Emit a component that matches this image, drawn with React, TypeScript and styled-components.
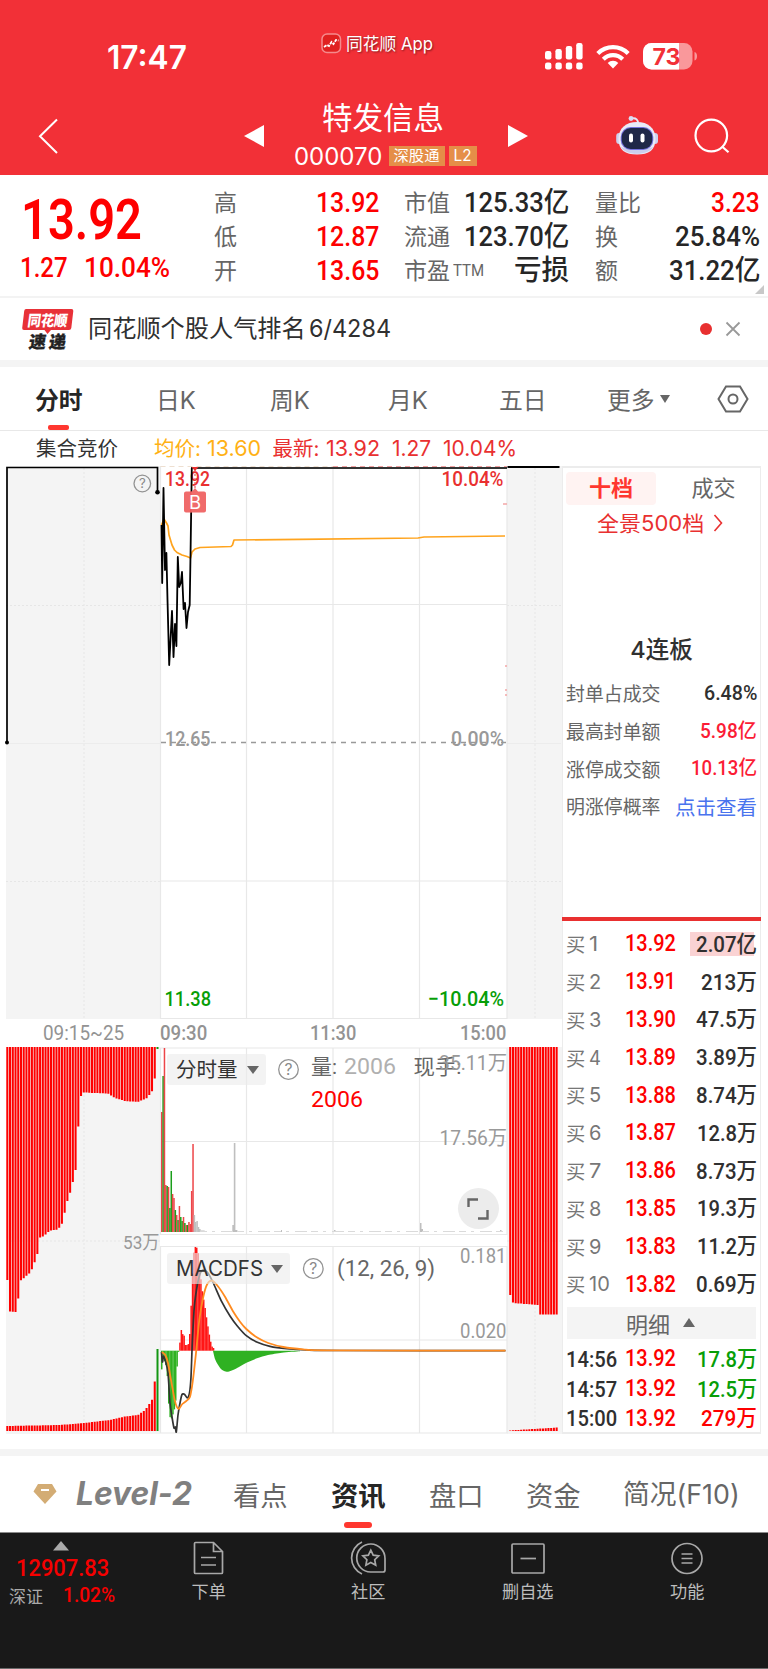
import React, { useLayoutEffect, useRef, useState } from "react";
import styled, { createGlobalStyle } from "styled-components";

const DIGITS = `Roboto, "Noto Sans CJK SC", sans-serif`;
const TEXT = `Inter, "Noto Sans CJK SC", sans-serif`;
const RED = "#fe0000";
const BRAND = "#f23037";

const Global = createGlobalStyle`
  * { box-sizing: border-box; }
  body { margin: 0; background: #fff; font-family: ${TEXT}; color: #303030; }
  svg { display: block; }
`;

const Screen = styled.div`
  width: 768px;
  height: 1669px;
  display: flex;
  flex-direction: column;
  overflow: hidden;
  background: #fff;
`;

/* ---------- fixed-width label: glyphs are condensed to the given width ---------- */

type FitProps = {
  w: number;
  size: number;
  color?: string;
  weight?: number;
  font?: string;
  italic?: boolean;
  ml?: number;
  children: React.ReactNode;
};

const FitBox = styled.span<{ $w: number; $size: number; $color?: string; $weight: number; $font: string; $italic?: boolean; $ml: number }>`
  display: inline-block;
  flex: none;
  width: ${(p) => p.$w}px;
  height: ${(p) => p.$size}px;
  margin-left: ${(p) => p.$ml}px;
  line-height: ${(p) => p.$size}px;
  font-size: ${(p) => p.$size}px;
  font-weight: ${(p) => p.$weight};
  font-family: ${(p) => p.$font};
  font-style: ${(p) => (p.$italic ? "italic" : "normal")};
  color: ${(p) => p.$color ?? "inherit"};
  white-space: pre;
`;

const FitInner = styled.span`
  display: inline-block;
  transform-origin: 0 50%;
`;

function Fit({ w, size, color, weight = 400, font = DIGITS, italic, ml = 0, children }: FitProps) {
  const ref = useRef<HTMLSpanElement>(null);
  const [scale, setScale] = useState(1);
  useLayoutEffect(() => {
    if (ref.current && ref.current.offsetWidth) setScale(w / ref.current.offsetWidth);
  }, [w]);
  return (
    <FitBox $w={w} $size={size} $color={color} $weight={weight} $font={font} $italic={italic} $ml={ml}>
      <FitInner ref={ref} style={{ transform: `scaleX(${scale})` }}>{children}</FitInner>
    </FitBox>
  );
}

/* ---------- header ---------- */

const Header = styled.header`
  height: 175px;
  flex: none;
  background: ${BRAND};
  color: #fff;
`;

const StatusBar = styled.div`
  height: 100px;
  padding: 30px 70px 0 107px;
  display: grid;
  grid-template-columns: 214px 224px 1fr;
  align-items: start;
`;

const Clock = styled.div`
  padding-top: 12px;
`;

const Watermark = styled.div`
  display: flex;
  align-items: center;
  gap: 4px;
  height: 27px;
  text-shadow: 1px 1px 2px rgba(0, 0, 0, 0.45);
`;

const StatusIcons = styled.div`
  display: flex;
  align-items: center;
  gap: 13px;
  padding-top: 13px;
`;

const NavRow = styled.div`
  height: 75px;
  padding-left: 37px;
  display: grid;
  grid-template-columns: 207px 20px 244px 20px 88px 78px 1fr;
  align-items: start;
`;

const Down = styled.div<{ $y: number }>`
  padding-top: ${(p) => p.$y}px;
`;

const TitleBlock = styled.div`
  display: flex;
  flex-direction: column;
  align-items: center;
`;

const StockName = styled.h1`
  margin: 2px 0 0 -6px;
  font-size: 30.5px;
  line-height: 32px;
  font-weight: 400;
`;

const CodeLine = styled.div`
  display: flex;
  align-items: center;
  margin-top: 10px;
  margin-left: -2px;
  height: 24px;
`;

const Badge = styled.span<{ $w: number; $ml: number }>`
  width: ${(p) => p.$w}px;
  height: 20px;
  margin-left: ${(p) => p.$ml}px;
  background: #e58e48;
  font-size: 15.3px;
  line-height: 19px;
  text-align: center;
`;

/* ---------- quote ---------- */

const Quote = styled.section`
  height: 123px;
  flex: none;
  display: grid;
  grid-template-columns: 214px 165px 25px 165px 26px 165px;
  border-bottom: 2px solid #f3f3f3;
  position: relative;
`;

const PriceBlock = styled.div`
  padding: 17px 0 0 21px;
`;

const ChangeLine = styled.div`
  display: flex;
  margin: 6px 0 0 -1px;
`;

const Stats = styled.div<{ $col: number }>`
  grid-column: ${(p) => p.$col};
  padding-top: 10.5px;
`;

const Stat = styled.div`
  height: 34px;
  display: flex;
  align-items: center;
  justify-content: space-between;
`;

const StatLabel = styled.span`
  font-size: 23px;
  line-height: 34px;
  color: #666;
  display: flex;
  align-items: center;
`;

const Corner = styled.i`
  position: absolute;
  right: 4px;
  bottom: 2px;
  border-left: 9px solid transparent;
  border-bottom: 9px solid #c8c8c8;
`;

/* ---------- news row ---------- */

const News = styled.section`
  height: 62px;
  flex: none;
  padding: 0 27px 0 22px;
  display: flex;
  align-items: center;
`;

const NewsText = styled.div`
  margin-left: 14px;
  flex: 1;
  display: flex;
  align-items: center;
`;

const NewsTitle = styled.span`
  font-size: 24.2px;
  line-height: 34px;
  width: 221px;
  white-space: nowrap;
`;

const Dot = styled.i`
  width: 12px;
  height: 12px;
  border-radius: 50%;
  background: #e83030;
  margin-right: 13px;
`;

const Band = styled.div<{ $h: number }>`
  height: ${(p) => p.$h}px;
  flex: none;
  background: #f4f4f4;
`;

/* ---------- period tabs ---------- */

const PeriodTabs = styled.nav`
  height: 64px;
  flex: none;
  padding: 0 0 0 35px;
  display: grid;
  grid-template-columns: 121px 114px 118px 111px 108px 110px 32px;
  border-bottom: 1px solid #e8e8e8;
`;

const PeriodTab = styled.div<{ $active?: boolean }>`
  height: 63px;
  display: flex;
  align-items: center;
  gap: 5px;
  font-size: 23.8px;
  color: ${(p) => (p.$active ? "#262626" : "#666")};
  font-weight: ${(p) => (p.$active ? 700 : 400)};
  position: relative;
  &::after {
    content: "";
    display: ${(p) => (p.$active ? "block" : "none")};
    position: absolute;
    left: 13px;
    bottom: 0;
    width: 21px;
    height: 5px;
    border-radius: 2px;
    background: #ff372f;
  }
`;

const Caret = styled.i<{ $w: number; $h: number; $up?: boolean; $color?: string }>`
  width: 0;
  height: 0;
  border-left: ${(p) => p.$w / 2}px solid transparent;
  border-right: ${(p) => p.$w / 2}px solid transparent;
  border-${(p) => (p.$up ? "bottom" : "top")}: ${(p) => p.$h}px solid ${(p) => p.$color ?? "#666"};
`;

const Legend = styled.div`
  height: 35px;
  flex: none;
  padding: 1px 0 0 36px;
  display: flex;
  align-items: center;
`;

const LegendTitle = styled.span<{ $w: number; $color: string }>`
  width: ${(p) => p.$w}px;
  color: ${(p) => p.$color};
  font-size: 20.5px;
  line-height: 30px;
  white-space: nowrap;
`;

/* ---------- chart area ---------- */

const Board = styled.main`
  height: 983px;
  flex: none;
  display: flex;
  padding-right: 7px;
`;

const Charts = styled.div`
  width: 562px;
  flex: none;
  display: flex;
  flex-direction: column;
`;

const TimeAxis = styled.div`
  height: 28px;
  display: flex;
  align-items: center;
  padding-left: 43px;
  color: #939393;
`;

const LowerCharts = styled.div`
  position: relative;
`;

const Selector = styled.button<{ $top: number; $w: number }>`
  position: absolute;
  left: 167px;
  top: ${(p) => p.$top}px;
  width: ${(p) => p.$w}px;
  height: 31px;
  border: 0;
  border-radius: 3px;
  padding: 0 7px 0 9px;
  display: flex;
  align-items: center;
  justify-content: space-between;
  background: rgba(236, 236, 236, 0.62);
  color: #333;
  font: 400 20.5px/31px ${TEXT};
`;

const Expand = styled.button`
  position: absolute;
  left: 457.5px;
  top: 141px;
  width: 41px;
  height: 41px;
  border: 0;
  padding: 0;
  border-radius: 50%;
  background: #ececec;
  display: grid;
  place-items: center;
`;

/* ---------- order book ---------- */

const Book = styled.aside`
  width: 199px;
  height: 968px;
  border: 1px solid #ececec;
  border-width: 2px 1px;
  display: flex;
  flex-direction: column;
  color: #303030;
  & > * {
    flex: none;
  }
`;

const BookTabs = styled.div`
  display: grid;
  grid-template-columns: 90px 1fr;
  padding: 4px 0 0 3px;
  height: 37px;
`;

const BookTab = styled.div<{ $active?: boolean }>`
  height: 33px;
  border-radius: 4px;
  font-size: 22px;
  line-height: 32px;
  padding-left: ${(p) => (p.$active ? 0 : 11)}px;
  text-align: center;
  background: ${(p) => (p.$active ? "#fff3f2" : "transparent")};
  color: ${(p) => (p.$active ? "#ff372f" : "#666")};
  font-weight: ${(p) => (p.$active ? 700 : 400)};
`;

const FullDepth = styled.div`
  height: 36px;
  padding-left: 34px;
  display: flex;
  align-items: center;
  gap: 9px;
  color: #e93030;
  font-size: 20.5px;
`;

const Streak = styled.div`
  margin-top: 88px;
  height: 45px;
  line-height: 42px;
  text-align: center;
  font-size: 23.5px;
  font-weight: 500;
`;

const LimitRow = styled.div`
  height: 37.7px;
  padding: 0 3px 0 3px;
  display: flex;
  align-items: center;
  justify-content: space-between;
  white-space: nowrap;
`;

const LimitLabel = styled.span`
  font-size: 18.9px;
  color: #666;
`;

const LimitLink = styled.span`
  font-size: 20.5px;
  color: #4a74ee;
`;

const Divider = styled.div`
  height: 4px;
  margin: 92.5px -1px 0;
  background: #e93030;
`;

const Bids = styled.div`
  padding-top: 4px;
`;

const BidRow = styled.div`
  height: 37.8px;
  padding: 0 3px;
  display: grid;
  grid-template-columns: 23px 36px 60px 1fr;
  align-items: center;
`;

const BidLabel = styled.span`
  font-size: 19.3px;
  color: #777;
`;

const Volume = styled.span<{ $hot?: boolean }>`
  display: flex;
  justify-content: flex-end;
  align-items: center;
  height: 24px;
  margin-left: 5px;
  background: ${(p) => (p.$hot ? "linear-gradient(90deg, #fad2d3 64px, transparent 64px)" : "none")};
`;

const DetailBar = styled.div`
  height: 32px;
  margin: 3.5px 4px 5.5px;
  background: #f4f4f4;
  display: flex;
  align-items: center;
  justify-content: center;
  gap: 13px;
  padding-right: 2px;
  font-size: 22px;
  color: #666;
`;

const TradeRow = styled.div`
  height: 29.7px;
  padding: 0 3px;
  display: grid;
  grid-template-columns: 59px 60px 1fr;
  align-items: center;
`;

/* ---------- footer ---------- */

const InfoTabs = styled.nav`
  height: 77px;
  flex: none;
  padding-left: 33px;
  display: grid;
  grid-template-columns: 43px 157px 98px 98px 97px 97px 1fr;
  border-bottom: 1px solid #8b8b8b;
`;

const InfoTab = styled.div<{ $active?: boolean }>`
  height: 76px;
  display: flex;
  align-items: center;
  white-space: nowrap;
  font-size: 27.3px;
  color: ${(p) => (p.$active ? "#262626" : "#666")};
  font-weight: ${(p) => (p.$active ? 700 : 400)};
  position: relative;
  &::after {
    content: "";
    display: ${(p) => (p.$active ? "block" : "none")};
    position: absolute;
    left: 13px;
    bottom: 4.5px;
    width: 28px;
    height: 6px;
    border-radius: 3px;
    background: #ff372f;
  }
`;

const BottomBar = styled.footer`
  height: 136px;
  flex: none;
  background: #191919;
  border-bottom: 1px solid #6a6a6a;
  display: grid;
  grid-template-columns: 129px repeat(4, 159.5px);
`;

const IndexBlock = styled.div`
  padding: 8px 0 0 9px;
  display: flex;
  flex-direction: column;
`;

const IndexValue = styled.div`
  height: 26px;
  margin-top: 4px;
  display: flex;
  align-items: center;
`;

const IndexLine = styled.div`
  display: flex;
  align-items: center;
  height: 24px;
  margin-top: 2px;
  color: #aaa;
  font-size: 17px;
`;

const Action = styled.div`
  display: flex;
  flex-direction: column;
  align-items: center;
  padding-top: 7px;
  font-size: 17.2px;
  line-height: 22px;
  color: #bdbdbd;
  gap: 5px;
`;

/* ---------- icons ---------- */

const Robot = () => (
  <svg width="44" height="42" viewBox="0 0 44 42">
    <path d="M22 10C22.500 6 20 3.500 15.500 4.500" stroke="#e6e8f7" strokeWidth="2" fill="none" />
    <circle cx="15" cy="4.500" r="2.400" fill="#d9dcf3" />
    <rect x=".2" y="19" width="6" height="11" rx="3" fill="#cdd1ef" />
    <rect x="36" y="19" width="6" height="11" rx="3" fill="#cdd1ef" />
    <path d="M21 8C32 8 39.500 14 39.500 25S33 40.500 21 40.500 2.500 36 2.500 25 10 8 21 8z" fill="#e9eaf8" />
    <path d="M5 33c4 9 28 9 32 0-6 3-26 3-32 0z" fill="#cbcdec" />
    <rect x="4.700" y="13" width="32.600" height="23" rx="10" fill="#7471dc" />
    <rect x="5.700" y="14" width="30.600" height="21" rx="9" fill="#1f2848" />
    <rect x="13" y="19.500" width="4" height="9" rx="2" fill="#fff" />
    <rect x="24.500" y="19.500" width="4" height="9" rx="2" fill="#fff" />
  </svg>
);

const Help = ({ x, y, r }: { x: number; y: number; r: number }) => (
  <g>
    <circle cx={x} cy={y} r={r} fill="none" stroke="#939393" strokeWidth="1.300" />
    <text x={x} y={y + r * 0.55} textAnchor="middle" fontSize={r * 1.6} fill="#8a8a8a" fontFamily="Inter, sans-serif">?</text>
  </g>
);

const SignalIcon = () => (
  <svg width="38" height="27" viewBox="0 0 38 27" fill="#fff">
    {[8, 6, 3, 0].map((top, i) => (
      <g key={i}>
        <rect x={i * 10.400} y={top} width="6.400" height={16.500 - top} rx="2.200" />
        <rect x={i * 10.400} y="19.500" width="6.400" height="7" rx="2.200" />
      </g>
    ))}
  </svg>
);

const WifiIcon = () => (
  <svg width="34" height="25" viewBox="0 0 34 25">
    <g fill="none" stroke="#fff" strokeWidth="4.200">
      <path d="M1.800 9.400a21.500 21.500 0 0 1 30.400 0" />
      <path d="M7.300 15.200a13.600 13.600 0 0 1 19.400 0" />
    </g>
    <path d="M17 24.500l-5.300-5.500a7.500 7.500 0 0 1 10.600 0z" fill="#fff" />
  </svg>
);

const BatteryIcon = () => (
  <svg width="55" height="27" viewBox="0 0 55 27">
    <defs>
      <clipPath id="charge"><rect width="36" height="27" /></clipPath>
    </defs>
    <rect width="49.500" height="26.500" rx="8.500" fill="#f9989b" />
    <rect width="49.500" height="26.500" rx="8.500" fill="#fff" clipPath="url(#charge)" />
    <path d="M51.500 9c3.400 1 3.400 7.500 0 8.500z" fill="#f9989b" />
    <text x="9.500" y="21.500" fontSize="22.500" fontWeight="700" fill={BRAND} fontFamily="Inter, sans-serif" textLength="28" lengthAdjust="spacingAndGlyphs">73</text>
  </svg>
);

const NewsLogo = () => (
  <svg width="52" height="43" viewBox="0 0 52 43">
    <path d="M4 1h45.500q2 0 1.800 2l-2 17q-.3 2-2.300 2H29l-3.500 4-3-4H2q-2 0-1.800-2l2-17Q2.500 1 4 1z" fill="#e83138" />
    <g transform="skewX(-8)" fontFamily={TEXT} fontWeight="900">
      <text x="7.500" y="18" fontSize="15" fill="#fff" textLength="40" lengthAdjust="spacingAndGlyphs">同花顺</text>
      <text x="12" y="40.500" fontSize="17" fill="#222" stroke="#222" strokeWidth=".3" textLength="37" lengthAdjust="spacing">速递</text>
    </g>
  </svg>
);

/* ---------- chart data ---------- */

type Pt = [number, number];
const path = (pts: Pt[]) => "M" + pts.map((p) => p.join(" ")).join("L");

const smooth = (pts: Pt[]) => {
  let d = `M${pts[0][0]} ${pts[0][1]}`;
  for (let i = 0; i < pts.length - 1; i++) {
    const p0 = pts[Math.max(i - 1, 0)];
    const p1 = pts[i];
    const p2 = pts[i + 1];
    const p3 = pts[Math.min(i + 2, pts.length - 1)];
    d += `C${p1[0] + (p2[0] - p0[0]) / 8} ${p1[1] + (p2[1] - p0[1]) / 8} ${p2[0] - (p3[0] - p1[0]) / 8} ${p2[1] - (p3[1] - p1[1]) / 8} ${p2[0]} ${p2[1]}`;
  }
  return d;
};

const at = (pts: Pt[], x: number) => {
  for (let i = 1; i < pts.length; i++) {
    if (x <= pts[i][0]) {
      const [x0, y0] = pts[i - 1];
      const [x1, y1] = pts[i];
      return y0 + ((y1 - y0) * (x - x0)) / (x1 - x0 || 1);
    }
  }
  return pts[pts.length - 1][1];
};

const PRICE: Pt[] = [[161.500, 525], [162.200, 583], [163.500, 488], [165, 570], [166.400, 553], [167.500, 600], [169.200, 665], [172, 611], [173.500, 657], [175, 624], [176.400, 646], [177.800, 557], [179.200, 587], [180.800, 583], [182, 572], [183.600, 609], [185, 603], [186.500, 628], [188, 612], [189.700, 605], [190.600, 550], [191.800, 468], [193, 468]];
const AVERAGE: Pt[] = [[161.500, 525], [164, 519], [166.500, 523], [168, 526], [169, 535], [172, 545], [174.500, 550], [177, 552.500], [182, 555], [187, 556.500], [190.500, 558], [192, 552], [195, 549], [200, 547.500], [231, 546.500], [232.500, 545], [234, 540], [300, 539.300], [418, 538], [424, 537], [505, 536]];

const PITCH = 2.73;
const AUCTION_TOP: Pt[] = [[6, 1280], [7.500, 1280], [8, 1311.500], [18, 1312], [18.500, 1281], [22, 1280], [26, 1276], [30, 1273], [33, 1267], [38, 1252], [39, 1238], [44, 1236], [50, 1230.500], [58, 1229.500], [63, 1222], [66, 1205], [71, 1190], [76, 1168], [77.500, 1140], [79, 1114], [80.500, 1097], [83, 1092.500], [108, 1093.500], [115, 1098], [125, 1101], [138, 1102], [147, 1098], [153, 1090], [154.500, 1080], [156, 1069]];
const AUCTION_BOTTOM: Pt[] = [[6, 1426], [60, 1425], [84, 1423], [110, 1420], [125, 1416.500], [138, 1415], [145, 1410], [150, 1403], [153, 1398], [154, 1385], [156, 1375]];
const CLOSE_TOP: Pt[] = [[508, 1295], [511, 1295], [512, 1303], [537, 1305], [538, 1314.500], [558, 1314.500]];

const MINUTE_VOLUME: [number, string][] = [[1112, "r"], [1076, "g"], [1048, "r"], [1185, "r"], [1186, "g"], [1187, "r"], [1208, "g"], [1171, "g"], [1194, "r"], [1198, "r"], [1210, "g"], [1215, "r"], [1220, "g"], [1206, "r"], [1217, "g"], [1221, "g"], [1217, "r"], [1223, "g"], [1225, "r"], [1225, "g"], [1222, "r"], [1224, "r"], [1191, "r"], [1144, "r"], [1215, "x"], [1222, "x"], [1221, "x"], [1227, "x"], [1229, "x"], [1230.500, "x"], [1230.500, "x"], [1230.500, "x"]];
const TONES: Record<string, string> = { r: "#ed4548", g: "#1b9e1b", x: "#bfbfbf" };

const HIST: Pt[] = [[161.500, 1371], [163, 1359], [165, 1362], [166.500, 1367], [168, 1384], [169, 1412], [170.500, 1419], [172, 1418], [174, 1410], [175.500, 1407], [176.500, 1375], [177.700, 1358], [179, 1348], [180, 1342], [181, 1329], [182.500, 1334], [184, 1335], [185.500, 1345], [188, 1345], [189.300, 1341], [190.500, 1320], [191.800, 1289], [193.300, 1256], [195, 1247], [196.500, 1247], [198, 1252], [199.500, 1270], [201, 1280], [202.500, 1293], [204.500, 1304], [206, 1314], [207.500, 1324], [209, 1333], [210.500, 1341], [212.500, 1348]];
const HUMP: Pt[] = [[213, 1351], [215, 1359], [217.500, 1364], [220.500, 1368.500], [224, 1371], [228, 1371.700], [233, 1370], [239, 1367], [247, 1362.500], [257, 1358.300], [268, 1355], [282, 1352.700], [300, 1351.300]];
const DIF: Pt[] = [[161.500, 1352], [162.500, 1362], [163.500, 1356], [165.700, 1362], [168, 1373], [170, 1403], [172, 1417], [174, 1428], [175.300, 1427], [176.300, 1432], [178, 1415], [180, 1403], [182, 1394.500], [184.700, 1394.500], [187.300, 1398], [189.500, 1393], [191, 1377], [192.300, 1343], [194.300, 1307], [197.300, 1285], [200, 1274], [203.300, 1269.500], [208.300, 1273.500], [213.300, 1283], [221.700, 1301.700], [230, 1316], [237.300, 1326], [246.300, 1335.700], [256.700, 1342], [270, 1346.300], [286.700, 1348.700], [306.700, 1350], [340, 1350.500], [505.500, 1350.700]];
const DEA: Pt[] = [[162, 1352], [165.300, 1355], [168, 1363], [171.300, 1381.700], [174.700, 1400], [176.700, 1406.700], [179, 1408.700], [182.300, 1404], [186.700, 1400.700], [190, 1396.700], [192.700, 1381.700], [196, 1353], [199.300, 1320], [203.300, 1296.700], [207.300, 1284], [212, 1280.700], [218.300, 1286.700], [225, 1296.700], [233.300, 1311.700], [240, 1321.700], [246.300, 1329], [256.700, 1337.300], [268.300, 1343], [283.300, 1347], [303.300, 1349.300], [326.700, 1350.300], [505.500, 1350.700]];

const Label = ({ x, y, w, size, fill, weight = 400, children }: { x: number; y: number; w: number; size: number; fill: string; weight?: number; children: string }) => (
  <text x={x} y={y} fontSize={size} fill={fill} fontWeight={weight} fontFamily={DIGITS} textLength={w} lengthAdjust="spacingAndGlyphs">{children}</text>
);

const VGRID = [246.500, 333, 419.500];

function PriceChart() {
  return (
    <svg width="562" height="553" viewBox="0 466 562 553">
      <rect x="6" y="466" width="154" height="553" fill="#f4f4f4" />
      <rect x="507" y="466" width="55" height="553" fill="#f4f4f4" />
      <g stroke="#e6e6e6" strokeWidth="1" strokeDasharray="2 2">
        <path d="M84 468V1019M535 468V1019M6 605.500H160M507 605.500H561M6 881.500H160M507 881.500H561" />
      </g>
      <g stroke="#e8e8e8" strokeWidth="1.200" fill="none">
        <path d="M6 743.500H160M507 743.500H561" stroke="#ececec" />
        <path d="M160.500 466V1018.500H507V466M160.500 604.500H507M160.500 881H507" />
        {VGRID.map((x) => <path key={x} d={`M${x} 467V1018`} />)}
      </g>
      <path d="M160.500 466.300H333" stroke="#eedfd0" strokeWidth="1.500" strokeDasharray="5 4" />
      <path d="M333 466.300H507" stroke="#f0a0a0" strokeWidth="1.500" strokeDasharray="5 4" />
      <path d="M161 742.500H507" stroke="#999" strokeWidth="1.300" strokeDasharray="5 5" />
      <path d="M503 504H507M505 666H507M505 690H507M505 695H507" stroke="#f4a6a6" strokeWidth="1.500" />
      <Label x={165} y={486} w={45} size={21} fill="#e93030" weight={500}>13.92</Label>
      <Label x={441.500} y={486} w={62} size={21} fill="#e93030" weight={500}>10.04%</Label>
      <Label x={165} y={746} w={45.500} size={21} fill="#999" weight={500}>12.65</Label>
      <Label x={451} y={746} w={53} size={21} fill="#999" weight={500}>0.00%</Label>
      <Label x={164.500} y={1006} w={46.500} size={21} fill="#079e07" weight={500}>11.38</Label>
      <Label x={428} y={1006} w={76} size={21} fill="#079e07" weight={500}>−10.04%</Label>
      <path d={path(AVERAGE)} fill="none" stroke="#ffa41e" strokeWidth="1.700" strokeLinejoin="round" />
      <path d={path(PRICE)} fill="none" stroke="#000" strokeWidth="1.800" strokeLinejoin="round" />
      <path d="M192 468H507" stroke="#333" strokeWidth="2" />
      <path d="M7 742V467.500H157.500V492" stroke="#000" strokeWidth="1.700" fill="none" />
      <path d="M507.500 467H559.500" stroke="#000" strokeWidth="2" />
      <circle cx="7" cy="742.500" r="2" />
      <circle cx="157.500" cy="492.300" r="2.300" />
      <path d="M195 470V490" stroke="#ee6a6a" strokeDasharray="2 2" strokeWidth="1.300" />
      <path d="M191.500 467h7l-3.500 4z" fill="#e93030" />
      <path d="M195 488l3 3.500h6q2 0 2 2v17q0 2-2 2h-18q-2 0-2-2v-17q0-2 2-2h6z" fill="#f06b6b" />
      <path d="M190.800 491V512.500" stroke="#e85555" strokeWidth="1" />
      <text x="195" y="509" textAnchor="middle" fontSize="18.500" fill="#fff" fontFamily="Inter, sans-serif">B</text>
      <Help x={142.300} y={483.500} r={8.300} />
    </svg>
  );
}

const range = (from: number, to: number, step: number) => {
  const out: number[] = [];
  for (let v = from; v < to; v += step) out.push(v);
  return out;
};

function LowerSvg() {
  const bars = range(6.300, 156, PITCH);
  return (
    <svg width="562" height="387" viewBox="0 1047 562 387">
      <rect x="6" y="1047" width="154" height="387" fill="#f4f4f4" />
      <rect x="507" y="1047" width="55" height="387" fill="#f4f4f4" />
      <g stroke="#e6e6e6" strokeDasharray="2 2">
        <path d="M84 1047V1434M535 1047V1434M6 1241H160M507 1241H561" />
      </g>
      <rect x="161" y="1047" width="346" height="387" fill="#fff" />
      <g stroke="#e8e8e8" strokeWidth="1.200" fill="none">
        <path d="M160.500 1048H507V1234.500H160.500zM160.500 1246.500H507V1433H160.500zM160.500 1141.500H507M160.500 1340H507" />
        {VGRID.map((x) => <path key={x} d={`M${x} 1048V1234M${x} 1246V1433`} />)}
      </g>
      <g fill="#ff0000">
        <path d={bars.map((x) => `M${x} 1047h2.050V${at(AUCTION_TOP, x + 1).toFixed(1)}h-2.050z`).join("")} />
        <path d={bars.map((x) => `M${x} 1431h2.050V${at(AUCTION_BOTTOM, x + 1).toFixed(1)}h-2.050z`).join("")} />
        <path d={range(509.200, 557.500, PITCH).map((x) => `M${x} 1047h2.050V${at(CLOSE_TOP, x).toFixed(1)}h-2.050z`).join("")} />
        <path d={range(509.200, 557.500, PITCH).map((x) => `M${x} 1431h2.050v${(-0.6 - ((x - 509) / 49) * 3).toFixed(1)}h-2.050z`).join("")} />
      </g>
      <path d="M156.500 1047h2v2h-2zM156.500 1349h2v82h-2z" fill="#129612" />
      {MINUTE_VOLUME.map(([top, tone], i) => (
        <rect key={i} x={161 + i * 1.360} y={top} width="1.500" height={1232 - top} fill={TONES[tone]} />
      ))}
      <path d="M233.800 1143h1.600v89h-1.600zM232.300 1225h1.500v7h-1.500zM235.400 1230h2v2h-2zM420 1223h1.500v9h-1.500zM421.500 1229h1.500v3h-1.500zM281 1230h1v2h-1zM334 1230h1.500v2h-1.500zM500 1230h1.500v2h-1.500z" fill="#bfbfbf" />
      <path d="M200 1231.500H507" stroke="#dadada" strokeDasharray="7 5 3 6 12 4" />
      {range(161, 213, 1.400).map((x) => {
        const y = at(HIST, x + 0.7);
        return <rect key={x} x={x} y={Math.min(y, 1350.700)} width="1.500" height={Math.abs(1350.700 - y)} fill={y < 1350.700 ? "#ff1616" : "#2fb122"} />;
      })}
      <path d={smooth(HUMP) + "V1350.700H213z"} fill="#2fb122" />
      <path d={smooth(DIF)} fill="none" stroke="#333" strokeWidth="1.700" />
      <path d={smooth(DEA)} fill="none" stroke="#ff8b20" strokeWidth="1.800" />
      <Help x={288.500} y={1069.500} r={9.800} />
      <Help x={313.300} y={1268.500} r={9.800} />
      <Label x={311} y={1074} w={26} size={21} fill="#666">量:</Label>
      <Label x={344} y={1074} w={52} size={21.500} fill="#b0b0b0">2006</Label>
      <Label x={413.500} y={1074} w={48} size={21} fill="#666">现手:</Label>
      <Label x={311} y={1107} w={52} size={21.500} fill="#ff0000">2006</Label>
      <Label x={439} y={1070} w={68} size={20.500} fill="#999">35.11万</Label>
      <Label x={439.500} y={1145} w={67.500} size={20.500} fill="#999">17.56万</Label>
      <Label x={460} y={1263} w={46.500} size={20.500} fill="#999">0.181</Label>
      <Label x={460} y={1338} w={46.500} size={20.500} fill="#999">0.020</Label>
      <Label x={337} y={1275.500} w={98} size={21.500} fill="#666">(12, 26, 9)</Label>
      <Label x={123} y={1249} w={36.500} size={19} fill="#999">53万</Label>
    </svg>
  );
}

/* ---------- page data ---------- */

type StatRow = { label: string; value: string; w: number; red?: boolean; sup?: string };
const STATS: StatRow[][] = [
  [{ label: "高", value: "13.92", w: 63, red: true }, { label: "低", value: "12.87", w: 63, red: true }, { label: "开", value: "13.65", w: 63, red: true }],
  [{ label: "市值", value: "125.33亿", w: 105 }, { label: "流通", value: "123.70亿", w: 105 }, { label: "市盈", value: "亏损", w: 55, sup: "TTM" }],
  [{ label: "量比", value: "3.23", w: 49, red: true }, { label: "换", value: "25.84%", w: 85 }, { label: "额", value: "31.22亿", w: 91 }],
];

const BIDS: [string, string, number][] = [
  ["13.92", "2.07亿", 61], ["13.91", "213万", 56], ["13.90", "47.5万", 61], ["13.89", "3.89万", 61], ["13.88", "8.74万", 61],
  ["13.87", "12.8万", 60], ["13.86", "8.73万", 61], ["13.85", "19.3万", 60], ["13.83", "11.2万", 60], ["13.82", "0.69万", 61],
];

const TRADES: [string, string, string, number][] = [
  ["14:56", "17.8万", "#079e07", 60],
  ["14:57", "12.5万", "#079e07", 60],
  ["15:00", "279万", RED, 56],
];

export default function App() {
  return (
    <Screen>
      <Global />
      <Header>
        <StatusBar>
          <Clock><Fit w={80} size={32} weight={600} font={TEXT}>17:47</Fit></Clock>
          <Watermark>
            <svg width="21" height="21" viewBox="0 0 21 21">
              <rect x="1" y="1" width="18.500" height="18.500" rx="5" fill="#e02020" stroke="#f58a8d" strokeWidth="1.500" />
              <path d="M3 14l3-2 2 1 2.500-4 2 2L15 7l2.500.5" fill="none" stroke="#fff" strokeWidth="1.800" strokeDasharray="3 1" />
            </svg>
            <Fit w={87} size={17.500} font={TEXT}>同花顺 App</Fit>
          </Watermark>
          <StatusIcons>
            <SignalIcon />
            <WifiIcon />
            <BatteryIcon />
          </StatusIcons>
        </StatusBar>
        <NavRow>
          <Down $y={18}>
            <svg width="22" height="36" viewBox="0 0 22 36" fill="none" stroke="#fff" strokeWidth="2"><path d="M20 1.500L3 18.300 20 35" /></svg>
          </Down>
          <Down $y={25}>
            <svg width="20" height="22" fill="#fff"><path d="M0 11L20 0V22z" /></svg>
          </Down>
          <TitleBlock>
            <StockName>特发信息</StockName>
            <CodeLine>
              <Fit w={88} size={24.500} font={TEXT}>000070</Fit>
              <Badge $w={56} $ml={7}>深股通</Badge>
              <Badge $w={28} $ml={4}>L2</Badge>
            </CodeLine>
          </TitleBlock>
          <Down $y={25}>
            <svg width="20" height="22" fill="#fff"><path d="M20 11L0 0V22z" /></svg>
          </Down>
          <span />
          <Down $y={14}><Robot /></Down>
          <Down $y={18}>
            <svg width="38" height="36" viewBox="0 0 38 36" fill="none" stroke="#fff" strokeWidth="2.200"><circle cx="17.300" cy="17.500" r="15.800" /><path d="M28 28.500l6.500 5.800" /></svg>
          </Down>
        </NavRow>
      </Header>

      <Quote>
        <PriceBlock>
          <Fit w={121} size={56} weight={600} color={RED}>13.92</Fit>
          <ChangeLine>
            <Fit w={48} size={28} weight={500} color={RED}>1.27</Fit>
            <Fit w={86} size={28} weight={500} color={RED} ml={16}>10.04%</Fit>
          </ChangeLine>
        </PriceBlock>
        {STATS.map((rows, c) => (
          <Stats key={c} $col={[2, 4, 6][c]}>
            {rows.map((r) => (
              <Stat key={r.label}>
                <StatLabel>{r.label}{r.sup && <Fit w={31} size={16} ml={3}>{r.sup}</Fit>}</StatLabel>
                <Fit w={r.w} size={28} weight={500} color={r.red ? RED : "#262626"}>{r.value}</Fit>
              </Stat>
            ))}
          </Stats>
        ))}
        <Corner />
      </Quote>

      <News>
        <NewsLogo />
        <NewsText>
          <NewsTitle>同花顺个股人气排名</NewsTitle>
          <Fit w={82} size={24} font={TEXT}>6/4284</Fit>
        </NewsText>
        <Dot />
        <svg width="16" height="16" stroke="#999" strokeWidth="1.800"><path d="M1.500 1.500l13 13M14.500 1.500l-13 13" /></svg>
      </News>
      <Band $h={7} />

      <PeriodTabs>
        <PeriodTab $active>分时</PeriodTab>
        <PeriodTab>日K</PeriodTab>
        <PeriodTab>周K</PeriodTab>
        <PeriodTab>月K</PeriodTab>
        <PeriodTab>五日</PeriodTab>
        <PeriodTab>更多<Caret $w={11} $h={8} /></PeriodTab>
        <PeriodTab>
          <svg width="32" height="28" viewBox="0 0 32 28" fill="none" stroke="#666" strokeWidth="2"><path d="M9 1.500h14L30.500 14 23 26.500H9L1.500 14z" /><circle cx="16" cy="14" r="4.500" /></svg>
        </PeriodTab>
      </PeriodTabs>

      <Legend>
        <LegendTitle $w={118} $color="#333">集合竞价</LegendTitle>
        <LegendTitle $w={53} $color="#ffb114">均价:</LegendTitle>
        <Fit w={54} size={21.500} color="#ffb114" font={TEXT}>13.60</Fit>
        <LegendTitle $w={65} $color="#e93030">&nbsp;&nbsp;最新:</LegendTitle>
        <Fit w={54} size={21.500} color="#e93030" font={TEXT}>13.92</Fit>
        <Fit w={39} size={21.500} color="#e93030" font={TEXT} ml={12}>1.27</Fit>
        <Fit w={74} size={21.500} color="#e93030" font={TEXT} ml={12}>10.04%</Fit>
      </Legend>

      <Board>
        <Charts>
          <PriceChart />
          <TimeAxis>
            <Fit w={81} size={21}>09:15~25</Fit>
            <Fit w={47} size={21} weight={500} ml={36}>09:30</Fit>
            <Fit w={46} size={21} weight={500} ml={103}>11:30</Fit>
            <Fit w={46} size={21} weight={500} ml={104}>15:00</Fit>
          </TimeAxis>
          <LowerCharts>
            <LowerSvg />
            <Selector $top={7} $w={99}>分时量<Caret $w={12} $h={8} /></Selector>
            <Selector $top={206} $w={123}><Fit w={87} size={21} font={TEXT}>MACDFS</Fit><Caret $w={12} $h={8} /></Selector>
            <Expand>
              <svg width="22" height="22" fill="none" stroke="#666" strokeWidth="2.400"><path d="M1.500 9V1.500H11M20.500 12V20.500H11" /></svg>
            </Expand>
          </LowerCharts>
        </Charts>

        <Book>
          <BookTabs>
            <BookTab $active>十档</BookTab>
            <BookTab>成交</BookTab>
          </BookTabs>
          <FullDepth>
            <Fit w={107} size={21} font={TEXT}>全景500档</Fit>
            <svg width="10" height="18" fill="none" stroke="#e93030" strokeWidth="1.600"><path d="M1.500 1l7 8-7 8" /></svg>
          </FullDepth>
          <Streak>4连板</Streak>
          <LimitRow><LimitLabel>封单占成交</LimitLabel><Fit w={53} size={20} weight={500}>6.48%</Fit></LimitRow>
          <LimitRow><LimitLabel>最高封单额</LimitLabel><Fit w={57} size={20} weight={500} color="#fb1c35">5.98亿</Fit></LimitRow>
          <LimitRow><LimitLabel>涨停成交额</LimitLabel><Fit w={66} size={20} weight={500} color="#fb1c35">10.13亿</Fit></LimitRow>
          <LimitRow><LimitLabel>明涨停概率</LimitLabel><LimitLink>点击查看</LimitLink></LimitRow>
          <Divider />
          <Bids>
            {BIDS.map(([price, vol, w], i) => (
              <BidRow key={price}>
                <BidLabel>买</BidLabel>
                <Fit w={i === 0 ? 9 : i === 9 ? 21 : 12} size={20} color="#777" font={TEXT}>{i + 1}</Fit>
                <Fit w={51} size={23.500} weight={500} color={RED}>{price}</Fit>
                <Volume $hot={i === 0}><Fit w={w} size={22.500} weight={500}>{vol}</Fit></Volume>
              </BidRow>
            ))}
          </Bids>
          <DetailBar>明细<Caret $w={12} $h={9} $up /></DetailBar>
          {TRADES.map(([time, vol, color, w]) => (
            <TradeRow key={time}>
              <Fit w={51} size={22.500} weight={500}>{time}</Fit>
              <Fit w={51} size={23.500} weight={500} color={RED}>13.92</Fit>
              <Volume><Fit w={w} size={22.500} weight={500} color={color}>{vol}</Fit></Volume>
            </TradeRow>
          ))}
        </Book>
      </Board>
      <Band $h={7} />

      <InfoTabs>
        <InfoTab>
          <svg width="24" height="22" viewBox="0 0 24 22"><path d="M5 1h14l4.500 7.500L12 21 .5 8.500z" fill="#d3ac74" /><path d="M8 7h8" stroke="#fff" strokeWidth="2" /></svg>
        </InfoTab>
        <InfoTab><Fit w={116} size={32} weight={700} italic color="#808080" font={TEXT}>Level-2</Fit></InfoTab>
        <InfoTab>看点</InfoTab>
        <InfoTab $active>资讯</InfoTab>
        <InfoTab>盘口</InfoTab>
        <InfoTab>资金</InfoTab>
        <InfoTab><Fit w={117} size={27} font={TEXT}>简况(F10)</Fit></InfoTab>
      </InfoTabs>

      <BottomBar>
        <IndexBlock>
          <svg width="100" height="10" fill="#aaa"><path d="M44 9.500L52 0l8 9.500z" /></svg>
          <IndexValue><Fit w={93} size={24.500} weight={500} color="#f60000" ml={7}>12907.83</Fit></IndexValue>
          <IndexLine>深证<Fit w={52} size={21} weight={500} color="#f60000" ml={20}>1.02%</Fit></IndexLine>
        </IndexBlock>
        <Action>
          <svg width="36" height="36" viewBox="0 0 36 36" fill="none" stroke="#a8a8a8" strokeWidth="1.700"><path d="M22.500 2.500H4.500q-1 0-1 1v29q0 1 1 1h26q1 0 1-1V11.500zM22.500 2.500v9h9M10 17.500h15M10 25h15" /></svg>
          下单
        </Action>
        <Action>
          <svg width="38" height="36" viewBox="0 0 38 36" fill="none" stroke="#a8a8a8" strokeWidth="1.700"><path d="M22 4a14.500 14.500 0 0 1 14 14.500V30q0 2-2 2H21.500A14 14 0 0 1 22 4zM13 2a17.500 17.500 0 0 0 0 32" /><path d="M21.800 10.200l2.400 5 5.500.7-4 3.800 1 5.500-4.900-2.700-4.900 2.700 1-5.500-4-3.800 5.500-.7z" /></svg>
          社区
        </Action>
        <Action>
          <svg width="36" height="36" viewBox="0 0 36 36" fill="none" stroke="#a8a8a8" strokeWidth="1.700"><rect x="2" y="4" width="32" height="29" rx="1" /><path d="M10.500 18.500h15.500" /></svg>
          删自选
        </Action>
        <Action>
          <svg width="36" height="36" viewBox="0 0 36 36" fill="none" stroke="#a8a8a8" strokeWidth="1.700"><circle cx="18" cy="18.500" r="15" /><path d="M12.500 14h11M12.500 18.500h11M12.500 23h11" /></svg>
          功能
        </Action>
      </BottomBar>
    </Screen>
  );
}
